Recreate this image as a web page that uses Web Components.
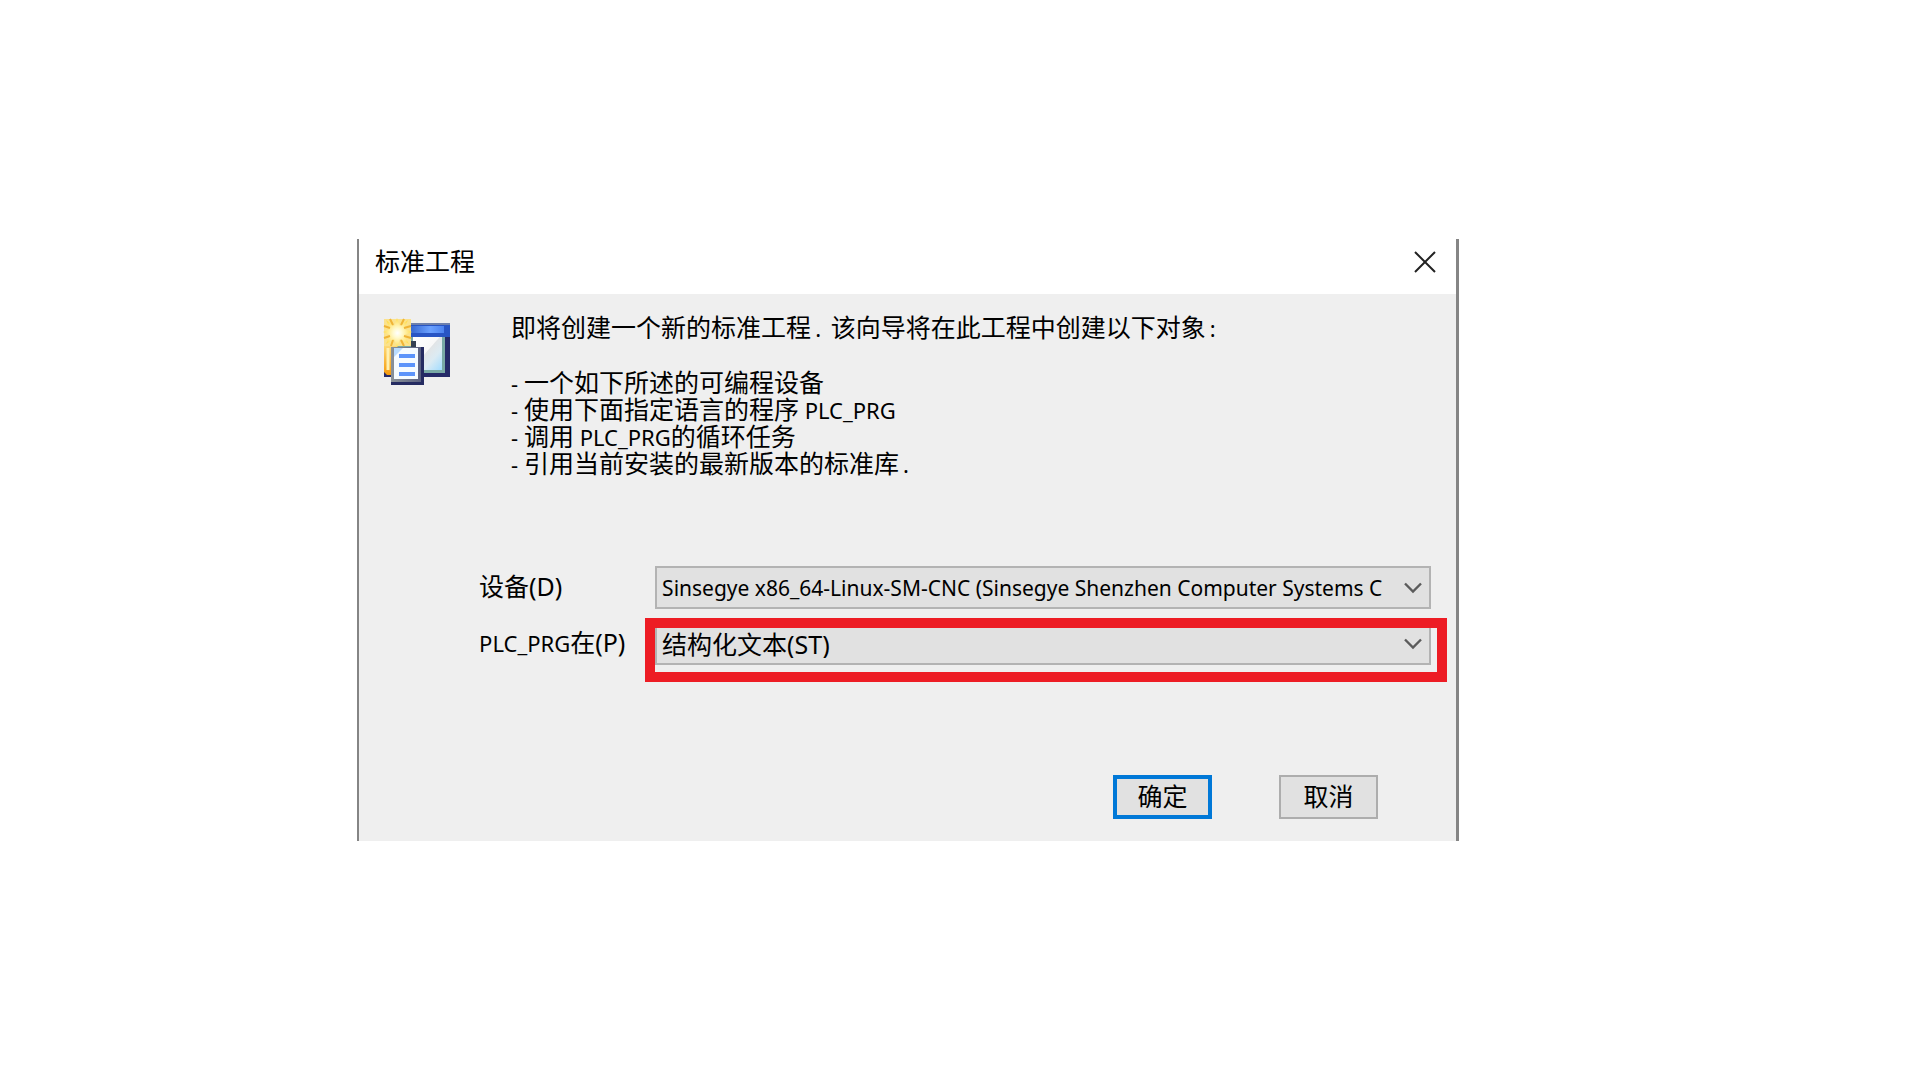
<!DOCTYPE html>
<html lang="zh-CN">
<head>
<meta charset="utf-8">
<title>标准工程</title>
<style>
  html, body { margin: 0; background: #fff; }
  body {
    box-sizing: border-box;
    padding: 239px 24px 24px 18.6vw;
    color: #000;
    font-family: "Noto Sans", "Noto Sans CJK SC", sans-serif;
    font-size: 25px;
    line-height: 27px;
  }
</style>
</head>
<body>
<standard-project-page></standard-project-page>

<script>
const define = (name, html, setup) => {
  const template = document.createElement('template');
  template.innerHTML = html.trim();
  customElements.define(name, class extends HTMLElement {
    constructor() {
      super();
      this.attachShadow({ mode: 'open' }).append(template.content.cloneNode(true));
    }
    connectedCallback() { if (setup) setup(this, this.shadowRoot); }
  });
};

// Western characters run slightly smaller than the Chinese ones.
define('latin-text', `
  <style>
    :host { font-size: 22px; line-height: 0; white-space: pre; }
    :host([stop]) { margin-inline: 4px; }
  </style><slot></slot>`);

define('project-icon', `
  <style>
    :host { display: block; flex: none; width: 68px; height: 68px; }
    svg { display: block; width: 100%; height: 100%; }
  </style>
  <svg viewBox="0 0 68 68" aria-hidden="true">
    <defs>
      <linearGradient id="pane" x1="0" y1="0" x2="1" y2="1">
        <stop offset="0" stop-color="#fff"/><stop offset=".45" stop-color="#f8f8f8"/>
        <stop offset=".47" stop-color="#e2e5e7"/><stop offset=".68" stop-color="#dcebf3"/><stop offset="1" stop-color="#a2dcff"/>
      </linearGradient>
      <linearGradient id="bar"><stop offset="0" stop-color="#3465cf"/><stop offset=".6" stop-color="#6ba1ff"/><stop offset="1" stop-color="#4c82ee"/></linearGradient>
      <linearGradient id="side" x1="0" y1="0" x2="0" y2="1"><stop offset="0" stop-color="#ffe58a"/><stop offset="1" stop-color="#f59a0c"/></linearGradient>
      <radialGradient id="glow"><stop offset="0" stop-color="#fff"/><stop offset=".3" stop-color="#fffad0"/><stop offset="1" stop-color="#ffdc50"/></radialGradient>
      <linearGradient id="edge"><stop offset="0" stop-color="#8a9298"/><stop offset="1" stop-color="#5a6080"/></linearGradient>
    </defs>
    <path d="M1 5H67V59H1z" fill="#252a68"/>
    <path d="M1 5H67V19H1z" fill="#2855c4"/>
    <path d="M27 5H67V7H27z" fill="#6d80ad"/>
    <path d="M27 8H61V15H27z" fill="url(#bar)"/>
    <path d="M3 19H62V55H3z" fill="#79a9a5"/>
    <path d="M30 19H59V52H30z" fill="url(#pane)"/>
    <path d="M1 22H14V57H4L1 54z" fill="url(#side)"/>
    <path d="M5 30V52" stroke="#fff0b0" stroke-width="3"/>
    <path d="M1 1H28V28H1z" fill="#fbe28c"/>
    <path d="M14 0L17 8 25 2 21 11 29 14 21 17 26 26 17 21 14 30 11 21 3 26 7 17 0 14 7 11 3 2 11 8z" fill="url(#glow)"/>
    <path d="M7 1L10 7M21 1L18 7M1 8L7 10M28 8L21 10M1 20L7 18M28 20L21 18M8 28L10 22M21 28L18 22" stroke="#f0b436" stroke-width="2"/>
    <path d="M28 23H33V30H28z" fill="#354152"/>
    <path d="M10 29H41V67H8V62z" fill="#252b61"/>
    <path d="M8 29H38V64H8z" fill="url(#edge)"/>
    <path d="M11 30H35V61H11z" fill="#f5fbff"/>
    <path d="M11 30H20L11 39z" fill="#b9dcff"/>
    <path d="M16 36H32V40H16zM16 45H32V49H16zM16 54H32V58H16z" fill="#5c94fa"/>
  </svg>`);

define('form-field', `
  <style>
    :host { display: grid; grid-template-columns: 176px minmax(0, 1fr); align-items: center; }
    label { padding-bottom: 2px; }
    .box { display: grid; grid-template-columns: minmax(0, 1fr) 40px; position: relative; }
    select {
      grid-area: 1 / 1 / 2 / 3;
      appearance: none; box-sizing: border-box; width: 100%; height: 43px; margin: 0;
      padding: 2px 38px 0 5px;
      border: 2px solid #b3b3b3; border-radius: 0; background: #e1e1e1;
      color: inherit; font: inherit; font-size: var(--field-size, 25px); outline: none;
    }
    svg { grid-area: 1 / 2; place-self: center start; margin-left: 12px; pointer-events: none; z-index: 1; }
    .mark { display: none; }
    :host([marked]) .mark {
      display: block; position: absolute; inset: -4px -16px -17px -10px;
      border: 10px solid #ed1c24; pointer-events: none;
    }
  </style>
  <label for="choice"><slot></slot></label>
  <div class="box">
    <select id="choice"><option></option></select>
    <svg width="20" height="12" viewBox="0 0 20 12" fill="none" stroke="#5b5b5b" stroke-width="2.4" aria-hidden="true"><path d="M2 1.5L10 9.5 18 1.5"/></svg>
    <div class="mark"></div>
  </div>`, (host, root) => {
    root.querySelector('option').textContent = host.getAttribute('value');
  });

define('dialog-button', `
  <style>
    :host { display: block; }
    button {
      display: block; box-sizing: border-box; width: 99px; height: 44px; margin: 0; padding: 0 0 2px;
      border: 2px solid #adadad; border-radius: 0; background: #e1e1e1; color: inherit; font: inherit;
    }
    :host([primary]) button { border: 4px solid #0078d7; }
  </style>
  <button type="button"><slot></slot></button>`);

define('dialog-window', `
  <style>
    :host {
      display: block; box-sizing: border-box; width: 100%; max-width: 1102px;
      border: solid #858585; border-width: 0 3px 0 2px; background: #efefef;
    }
    header {
      display: flex; align-items: center; justify-content: space-between;
      height: 55px; box-sizing: border-box; padding: 0 20px 10px 16px; background: #fff;
    }
    h1 { margin: 0; font: inherit; }
    button { display: block; margin: 0; padding: 0; border: 0; background: none; }
    svg { display: block; }
  </style>
  <header>
    <h1><slot name="title"></slot></h1>
    <button type="button" aria-label="关闭"><svg width="22" height="22" viewBox="0 0 22 22" stroke="#222" stroke-width="2"><path d="M1 1L21 21M21 1L1 21"/></svg></button>
  </header>
  <slot></slot>`);

define('standard-project-page', `
  <style>
    :host { display: block; }
    .intro { display: flex; gap: 60px; padding: 20px 20px 0 24px; }
    project-icon { margin-top: 4px; }
    p, ul { margin: 0; padding: 0; list-style: none; }
    ul { margin-top: 28px; }
    form { display: grid; gap: 13px; padding: 89px 25px 0 120px; }
    .compact { --field-size: 21px; }
    footer { display: flex; justify-content: flex-end; gap: 67px; padding: 110px 78px 22px 0; }
  </style>
  <dialog-window>
    <span slot="title">标准工程</span>
    <section class="intro">
      <project-icon></project-icon>
      <div>
        <p>即将创建一个新的标准工程<latin-text stop>. </latin-text>该向导将在此工程中创建以下对象<latin-text stop>:</latin-text></p>
        <ul>
          <li><latin-text>- </latin-text>一个如下所述的可编程设备</li>
          <li><latin-text>- </latin-text>使用下面指定语言的程序<latin-text> PLC_PRG</latin-text></li>
          <li><latin-text>- </latin-text>调用<latin-text> PLC_PRG</latin-text>的循环任务</li>
          <li><latin-text>- </latin-text>引用当前安装的最新版本的标准库<latin-text stop>.</latin-text></li>
        </ul>
      </div>
    </section>
    <form>
      <form-field class="compact" value="Sinsegye x86_64-Linux-SM-CNC (Sinsegye Shenzhen Computer Systems C">设备(D)</form-field>
      <form-field marked value="结构化文本(ST)"><latin-text>PLC_PRG</latin-text>在(P)</form-field>
    </form>
    <footer>
      <dialog-button primary>确定</dialog-button>
      <dialog-button>取消</dialog-button>
    </footer>
  </dialog-window>`);
</script>
</body>
</html>
